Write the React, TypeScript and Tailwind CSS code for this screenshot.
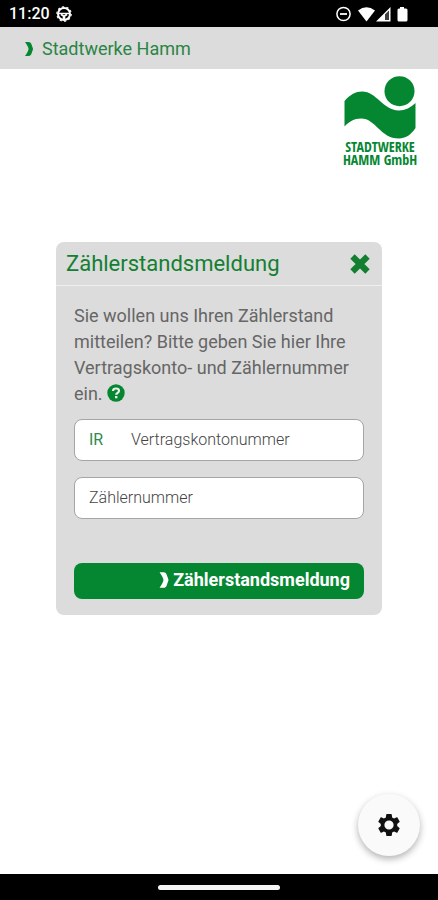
import type { ReactNode } from "react";

function Chevron({ className }: { className: string }) {
  return (
    <svg viewBox="0 0 9 14" className={className} fill="currentColor" aria-hidden="true">
      <path d="M0.500 0H4Q6.500 0 7.200 3L8.600 7L7.200 11Q6.500 14 4 14H0.500Q4 9 4 7Q4 5 0.500 0Z" />
    </svg>
  );
}

function StatusBar() {
  return (
    <div className="flex h-[27px] items-center justify-between bg-black pl-[9px] pr-[29px] text-white">
      <div className="flex items-center gap-[6px]">
        <span className="text-base font-medium">11:20</span>
        <svg viewBox="0 0 16 16" className="size-4" fill="none" stroke="currentColor" aria-hidden="true">
          <circle cx="8" cy="8" r="6" strokeWidth="2" />
          <circle cx="8" cy="8" r="7.200" strokeWidth="1.200" strokeDasharray="2.200 2.324" />
          <path d="M2 7.500H14M5 8.500L7.500 10V13.500M11 8.500L8.500 10V13.500" strokeWidth="1.600" />
        </svg>
      </div>
      <svg viewBox="0 0 74 18" className="h-[18px] w-[74px]" fill="currentColor" aria-hidden="true">
        <g fill="none" stroke="currentColor">
          <circle cx="8.500" cy="9" r="6.600" strokeWidth="1.500" />
          <path d="M5 9H12" strokeWidth="1.800" />
        </g>
        <path d="M23 5.500Q31.500 -1 40 5.500L31.500 16.500Z" />
        <path fillRule="evenodd" d="M41 16.500L55.500 2V16.500ZM50 9.500V15H54V5.500Z" />
        <path d="M50 9.500L54 5.500V15H50Z" opacity="0.25" />
        <path d="M65 2H69V3.500H71Q72.500 3.500 72.500 5V15Q72.500 16.500 71 16.500H64Q62.500 16.500 62.500 15V5Q62.500 3.500 64 3.500H65Z" />
      </svg>
    </div>
  );
}

function Logo() {
  return (
    <div className="flex w-[72px] flex-col items-center text-[#058732]">
      <svg viewBox="0 0 72 64" className="h-16 w-full" fill="currentColor" aria-hidden="true">
        <circle cx="55.500" cy="15.200" r="15" />
        <path d="M0.500 25C6 18.500 12 15.500 18 15.500C33 15.500 38 34 55 34.500C61 34.500 67 31.500 71.500 27V52C67 59 61 62.500 55 62.500C36 62.500 32 42.500 17 42.500C10 42.500 5 46 0.500 50.500Z" />
      </svg>
      <p className="whitespace-nowrap text-center font-['Open_Sans_Condensed','Liberation_Sans_Narrow',Roboto,sans-serif] text-[14px] font-bold leading-[13px]">
        STADTWERKE
        <br />
        HAMM GmbH
      </p>
    </div>
  );
}

function Field({ label, children }: { label: string; children?: ReactNode }) {
  return (
    <label className="flex h-[42px] items-center rounded-lg border border-[#a5a5a5] bg-white px-[14px] text-base">
      {children}
      <input
        type="text"
        aria-label={label}
        placeholder={label}
        className="min-w-0 flex-1 bg-transparent font-light text-[#444] outline-none placeholder:text-[#444]"
      />
    </label>
  );
}

function ReadingDialog() {
  return (
    <section role="dialog" aria-labelledby="dialog-title" className="mx-14 rounded-lg bg-[#dcdcdc]">
      <header className="flex h-11 items-center justify-between border-b border-[#efefef] pl-[10px] pr-3 text-[#128030]">
        <h1 id="dialog-title" className="text-[22px]">Zählerstandsmeldung</h1>
        <button type="button" aria-label="Schließen">
          <svg viewBox="0 0 20 20" className="size-5" fill="none" stroke="currentColor" strokeWidth="6.200" aria-hidden="true">
            <path d="M2.500 2.500L17.500 17.500M17.500 2.500L2.500 17.500" />
          </svg>
        </button>
      </header>
      <form className="px-[18px] pb-4 pt-[17px]" onSubmit={(event) => event.preventDefault()}>
        <p className="text-lg leading-[26px] text-[#666]">
          Sie wollen uns Ihren Zählerstand mitteilen? Bitte geben Sie hier Ihre Vertragskonto- und Zählernummer ein.{" "}
          <button type="button" aria-label="Hilfe" className="align-[-2px] text-[#058732]">
            <svg viewBox="0 0 18 18" className="size-[18px]" aria-hidden="true">
              <circle cx="9" cy="9" r="8.700" fill="currentColor" />
              <path d="M6 7Q6 4.500 9 4.500Q12 4.500 12 6.800Q12 8.200 10.500 8.900Q9.200 9.500 9.200 10.800" fill="none" stroke="#eee" strokeWidth="2.200" />
              <path d="M8 12H10.400V14.300H8Z" fill="#eee" />
            </svg>
          </button>
        </p>
        <div className="mt-3 flex flex-col gap-4">
          <Field label="Vertragskontonummer">
            <span className="w-[42px] text-[#2f8a4c]">IR</span>
          </Field>
          <Field label="Zählernummer" />
        </div>
        <button
          type="submit"
          className="mt-11 flex h-9 w-full items-center justify-end gap-1 rounded-lg bg-[#058732] pb-[2px] pr-[14px] text-lg font-bold text-white"
        >
          <Chevron className="h-4 w-[10px]" />
          Zählerstandsmeldung
        </button>
      </form>
    </section>
  );
}

export default function App() {
  return (
    <div className="flex min-h-screen flex-col bg-white font-[Roboto,sans-serif]">
      <StatusBar />
      <header className="flex h-[42px] items-center gap-2 bg-[#dcdcdc] pl-6 pt-[2px] text-[#2a8545]">
        <Chevron className="h-[14px] w-[10px] text-[#058732]" />
        <span className="text-lg">Stadtwerke Hamm</span>
      </header>
      <main className="relative flex-1 pt-[7px]">
        <div className="flex justify-end pr-[22px]">
          <Logo />
        </div>
        <div className="mt-[76px]">
          <ReadingDialog />
        </div>
        <button
          type="button"
          aria-label="Einstellungen"
          className="absolute bottom-[18px] right-[18px] flex size-[62px] items-center justify-center rounded-full bg-[#fafafa] text-[#111] shadow-[0_3px_7px_rgba(0,0,0,0.3)]"
        >
          <svg viewBox="2 2 20 20" className="size-[22px]" fill="currentColor" aria-hidden="true">
            <path fillRule="evenodd" d="M19.430 12.980c.04-.32.07-.64.07-.98s-.03-.66-.07-.98l2.110-1.650a.5.500 0 0 0 .12-.64l-2-3.460a.5.500 0 0 0-.61-.22l-2.490 1a7.300 7.300 0 0 0-1.690-.98l-.38-2.650A.49.490 0 0 0 14 2h-4a.49.490 0 0 0-.49.420l-.38 2.650c-.61.250-1.170.590-1.690.980l-2.490-1a.5.500 0 0 0-.61.220l-2 3.460a.5.500 0 0 0 .12.640l2.110 1.650a7.900 7.900 0 0 0 0 1.960l-2.110 1.650a.5.500 0 0 0-.12.640l2 3.460a.5.500 0 0 0 .61.220l2.490-1c.52.400 1.080.730 1.690.980l.38 2.650c.03.240.24.420.49.420h4c.25 0 .46-.18.490-.42l.38-2.650a7.300 7.300 0 0 0 1.690-.98l2.490 1c.23.090.49 0 .61-.22l2-3.460a.5.500 0 0 0-.12-.64ZM12 16.200a4.200 4.200 0 1 1 0-8.400 4.200 4.200 0 0 1 0 8.400Z" />
          </svg>
        </button>
      </main>
      <footer className="flex h-[26px] items-center justify-center bg-black">
        <div className="h-[5px] w-[122px] rounded-full bg-[#f5f5f5]" />
      </footer>
    </div>
  );
}
